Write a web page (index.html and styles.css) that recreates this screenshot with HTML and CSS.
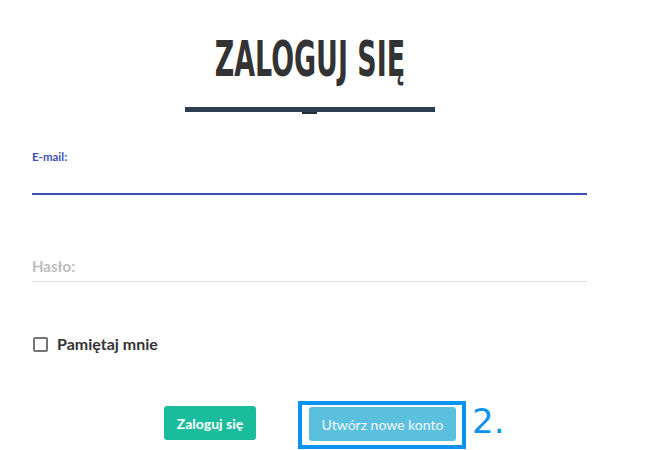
FILE: index.html
```html
<!DOCTYPE html>
<html lang="pl">
<head>
<meta charset="utf-8">
<title>Zaloguj się</title>
<link rel="stylesheet" href="styles.css">
</head>
<body>
<main class="page">
  <header class="head">
    <h1 class="title"><span class="title-text">ZALOGUJ SIĘ</span></h1>
    <div class="bar"><span class="bar-tab"></span></div>
  </header>
  <form class="form">
    <div class="field field-active">
      <label class="label label-small">E-mail:</label>
      <div class="line line-active"></div>
    </div>
    <div class="field field-pass">
      <label class="label label-big">Hasło:</label>
      <div class="line"></div>
    </div>
    <label class="remember">
      <span class="box"></span>
      <span class="remember-text">Pamiętaj mnie</span>
    </label>
    <div class="actions">
      <button type="button" class="btn btn-green">Zaloguj się</button>
      <span class="highlight">
        <button type="button" class="btn btn-blue">Utwórz nowe konto</button>
      </span>
      <span class="note">2.</span>
    </div>
  </form>
</main>
</body>
</html>
```
FILE: styles.css
```css
html, body {
  margin: 0;
  padding: 0;
  background: #fff;
}
body {
  font-family: Lato, "Liberation Sans", sans-serif;
  width: 646px;
  height: 450px;
  overflow: hidden;
}
.page {
  margin-left: 32px;
  width: 555px;
}
.head {
  display: flex;
  flex-direction: column;
  align-items: center;
  padding-top: 30px;
}
.title {
  margin: 0;
  height: 60px;
  display: flex;
  justify-content: center;
  align-items: center;
  width: 100%;
}
.title-text {
  display: inline-block;
  font-family: "DejaVu Sans Condensed", "DejaVu Sans", sans-serif;
  font-weight: bold;
  font-size: 49px;
  line-height: 60px;
  color: #333;
  transform: scaleX(0.61);
  white-space: nowrap;
}
.bar {
  margin-top: 17px;
  width: 250px;
  height: 5px;
  background: #2c3e50;
  position: relative;
}
.bar-tab {
  position: absolute;
  left: 117px;
  top: 5px;
  width: 15px;
  height: 2px;
  background: #1f2d3d;
}
.form {
  display: flex;
  flex-direction: column;
}
.field {
  display: flex;
  flex-direction: column;
}
.field-active {
  margin-top: 38px;
}
.label {
  font-weight: bold;
}
.label-small {
  font-size: 11.5px;
  line-height: 14px;
  color: #3f51b5;
}
.line {
  height: 1px;
  background: #ddd;
}
.line-active {
  margin-top: 29px;
  height: 2px;
  background: #3f51b5;
}
.field-pass {
  margin-top: 62px;
}
.label-big {
  font-size: 15px;
  line-height: 18px;
  color: #bdbdbd;
  margin-bottom: 6px;
}
.remember {
  margin-top: 53px;
  display: flex;
  align-items: center;
  gap: 9px;
}
.box {
  width: 11px;
  height: 11px;
  border: 2px solid #757575;
  border-radius: 2px;
  margin-left: 1px;
}
.remember-text {
  font-weight: bold;
  font-size: 16px;
  color: #333;
  line-height: 18px;
}
.actions {
  margin-top: 48px;
  display: flex;
  align-items: flex-start;
  padding-left: 132px;
}
.btn {
  font-family: Lato, "Liberation Sans", sans-serif;
  border: none;
  border-radius: 3px;
  height: 34px;
  color: #fff;
  font-size: 14px;
  padding: 0;
  cursor: pointer;
}
.btn-green {
  margin-top: 5px;
  width: 92px;
  background: #1abc9c;
  font-weight: bold;
}
.highlight {
  margin-left: 42px;
  border: 4px solid #0a94f0;
  padding: 2px 6px 4px 7px;
  display: flex;
}
.btn-blue {
  width: 147px;
  background: #5bc0de;
  font-weight: normal;
  color: #f4f8fa;
  font-size: 14px;
}
.note {
  margin-left: 6px;
  font-family: "DejaVu Sans", sans-serif;
  font-size: 34px;
  line-height: 40px;
  color: #0a94f0;
}
```
